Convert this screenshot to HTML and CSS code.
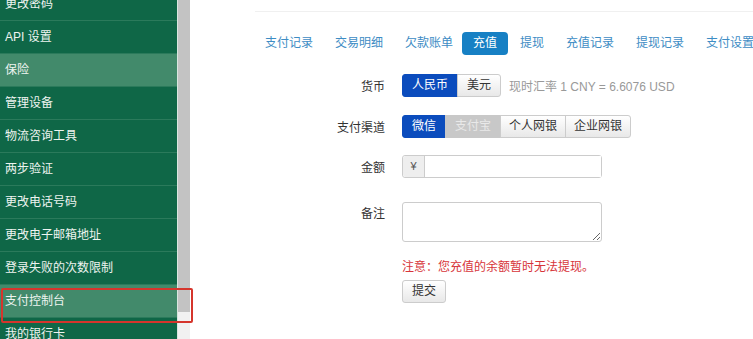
FILE: index.html
```html
<!doctype html>
<html lang="zh-CN">
  <head>
    <meta charset="UTF-8" />
    <meta name="viewport" content="width=device-width, initial-scale=1.0" />
    <title>支付控制台 - 充值</title>
    <link rel="stylesheet" href="styles.css">
  </head>
  <body>
    <div class="page">
      <div class="side">
        <ul class="side-menu">
          <li>更改密码</li>
          <li>API 设置</li>
          <li class="hover">保险</li>
          <li>管理设备</li>
          <li>物流咨询工具</li>
          <li>两步验证</li>
          <li>更改电话号码</li>
          <li>更改电子邮箱地址</li>
          <li>登录失败的次数限制</li>
          <li class="hover">支付控制台</li>
          <li>我的银行卡</li>
        </ul>
        <div class="side-scroll">
          <div class="scroll-thumb"></div>
        </div>
        <div class="mark"></div>
      </div>

      <div class="main">
        <ul class="tabs">
          <li>支付记录</li>
          <li>交易明细</li>
          <li>欠款账单</li>
          <li class="active">充值</li>
          <li>提现</li>
          <li>充值记录</li>
          <li>提现记录</li>
          <li>支付设置</li>
        </ul>

        <form class="form">
          <div class="row row-currency">
            <label class="lbl">货币</label>
            <div class="btn-group">
              <span class="btn btn-on">人民币</span>
              <span class="btn">美元</span>
            </div>
            <span class="rate">现时汇率 1 CNY = 6.6076 USD</span>
          </div>
          <div class="row row-channel">
            <label class="lbl">支付渠道</label>
            <div class="btn-group">
              <span class="btn btn-on">微信</span>
              <span class="btn btn-off">支付宝</span>
              <span class="btn btn-narrow">个人网银</span>
              <span class="btn btn-narrow">企业网银</span>
            </div>
          </div>
          <div class="row row-amount">
            <label class="lbl">金额</label>
            <div class="input-group">
              <span class="addon">¥</span>
              <input type="text" class="field" />
            </div>
          </div>
          <div class="row row-note">
            <label class="lbl">备注</label>
            <textarea class="memo"></textarea>
          </div>
          <div class="row row-warn">
            <span class="lbl"></span>
            <div class="warn-box">
              <p class="warn">注意：您充值的余额暂时无法提现。</p>
              <button type="button" class="btn submit">提交</button>
            </div>
          </div>
        </form>
      </div>
    </div>
  </body>
</html>
```

FILE: styles.css
```css
body {
  margin: 0;
  background-color: #fff;
  font-family: "Liberation Sans", "Noto Sans CJK SC", sans-serif;
  font-size: 12px;
  color: #333;
  overflow: hidden;
}
.page {
  display: flex;
  height: 339px;
}
.side {
  position: relative;
  display: flex;
  width: 190px;
  flex-shrink: 0;
}
.side-menu {
  list-style: none;
  margin: -12px 0 0 0;
  padding: 0;
  width: 177px;
  background-color: #0f6747;
  border-right: 1px solid #d9e6df;
}
.side-menu li {
  height: 32px;
  line-height: 32px;
  padding-left: 5px;
  color: #eef4f0;
  border-bottom: 1px solid #2b7a5b;
}
.side-menu li.hover {
  background-color: #428a6b;
}
.side-scroll {
  display: flex;
  flex-direction: column;
  width: 12px;
  background-color: #f1f1f1;
}
.scroll-thumb {
  height: 312px;
  background-color: #c3c3c3;
}
/* red annotation box round the current item */
.mark {
  position: absolute;
  left: 1px;
  top: 288px;
  width: 188px;
  height: 31px;
  border: 2px solid #d5352c;
  border-radius: 2px;
}
.main {
  flex: 1;
  padding-left: 65px;
}
.tabs {
  list-style: none;
  margin: 11px 0 0 0;
  padding: 20px 0 0 0;
  border-top: 1px solid #f0f0f0;
  display: flex;
  white-space: nowrap;
}
.tabs li {
  padding: 0 10px;
  height: 23px;
  line-height: 23px;
  margin-right: 2px;
  color: #3d8cc4;
  border-radius: 4px;
  font-size: 12px;
}
.tabs li.active {
  background-color: #1780c4;
  color: #fff;
  padding: 0 11px;
  margin-left: -3px;
}
.form {
  margin-top: 19px;
}
.row {
  display: flex;
  align-items: center;
}
.lbl {
  width: 130px;
  flex-shrink: 0;
  text-align: right;
  margin-right: 17px;
  color: #333;
}
.row-currency {
  margin-bottom: 18px;
}
.row-channel {
  margin-bottom: 17px;
}
.row-amount {
  margin-bottom: 24px;
}
.row-note {
  align-items: flex-start;
  margin-bottom: 17px;
}
.row-note .lbl {
  line-height: 24px;
}
.row-warn {
  align-items: flex-start;
}
.btn-group {
  display: flex;
}
.btn {
  display: inline-block;
  height: 21px;
  line-height: 21px;
  padding: 0 9px;
  border: 1px solid #ccc;
  background: linear-gradient(#fff, #e8e8e8);
  color: #333;
  font-family: inherit;
  font-size: 12px;
}
.btn-group .btn + .btn {
  margin-left: -1px;
}
.btn-group .btn:first-child {
  border-radius: 3px 0 0 3px;
}
.btn-group .btn:last-child {
  border-radius: 0 3px 3px 0;
}
.btn-narrow {
  padding: 0 8px;
}
.btn-on {
  background: #0b4cbd;
  border-color: #0b4cbd;
  color: #fff;
}
.btn-off {
  background: #c8c8c8;
  border-color: #c8c8c8;
  color: #e9e9e9;
}
.rate {
  margin-left: 8px;
  color: #999;
}
.input-group {
  display: flex;
  width: 200px;
  height: 23px;
  border: 1px solid #ccc;
  border-radius: 3px;
  box-sizing: border-box;
}
.addon {
  width: 21px;
  background-color: #eee;
  border-right: 1px solid #ccc;
  text-align: center;
  line-height: 21px;
  color: #555;
  font-size: 11px;
  border-radius: 3px 0 0 3px;
}
.field {
  flex: 1;
  border: none;
  outline: none;
  min-width: 0;
  padding: 0 4px;
}
.memo {
  width: 200px;
  height: 40px;
  box-sizing: border-box;
  border: 1px solid #ccc;
  border-radius: 3px;
  margin: 0;
  resize: vertical;
  font-family: inherit;
}
.warn-box {
  display: flex;
  flex-direction: column;
  align-items: flex-start;
}
.warn {
  margin: 0 0 4px 0;
  line-height: 17px;
  color: #d7353a;
}
.submit {
  border-radius: 3px;
  height: 23px;
  line-height: 21px;
  padding: 0 9px;
}
```
